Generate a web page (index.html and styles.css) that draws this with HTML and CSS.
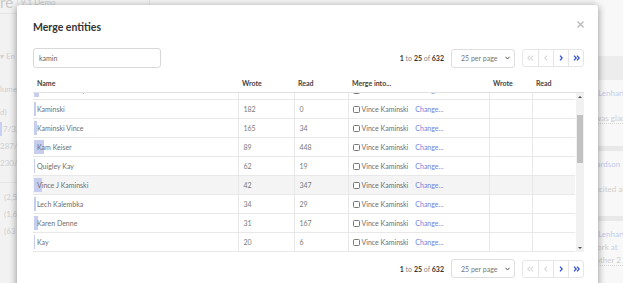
FILE: index.html
```html
<!DOCTYPE html>
<html lang="en">
<head>
  <meta charset="UTF-8">
  <title>Merge entities</title>
  <link rel="stylesheet" href="styles.css">
</head>
<body>
  <!-- Page behind the dialog (mostly covered) -->
  <div class="page">
    <div class="page-left">
      <div class="page-top">
        <span class="page-title">re</span>
      </div>
      <div class="faint-row gap-l">&#9662; En</div>
      <div class="faint-row gap-m">lume</div>
      <div class="faint-row gap-s">d)</div>
      <div class="faint-row stat"><span class="stat-bar"></span>7/3,19</div>
      <div class="faint-row">287/59</div>
      <div class="faint-row">230/46</div>
      <div class="page-rule"></div>
      <div class="faint-row num">(2,52</div>
      <div class="faint-row num">(1,63</div>
      <div class="faint-row num">(63</div>
    </div>
    <div class="page-mid">
      <div class="fake-select">9.1 Demo</div>
    </div>
    <div class="page-right">
      <div class="band band-top"></div>
      <div class="card">
        <div class="link">y Lenhart</div>
        <div class="note">I was glad</div>
      </div>
      <div class="band"></div>
      <div class="card">
        <div class="link">hardson</div>
        <div class="note plain">excited about</div>
      </div>
      <div class="band"></div>
      <div class="card">
        <div class="link">y Lenhart</div>
        <div class="note plain tight">work at</div>
        <div class="note tight">nother 2</div>
      </div>
    </div>
  </div>

  <!-- Merge dialog -->
  <div class="modal">
    <div class="modal-header">
      <h2>Merge entities</h2>
      <span class="close">
        <svg width="7" height="7" viewBox="0 0 7 7"><path d="M0.5 0.5 L6.5 6.5 M6.5 0.5 L0.5 6.5" stroke="#b5b5b5" stroke-width="1.2" fill="none"/></svg>
      </span>
    </div>

    <div class="toolbar">
      <input class="search" type="text" value="kamin">
      <div class="pager">
        <span class="pager-info"><b>1</b> to <b>25</b> of <b>632</b></span>
        <div class="per-page">
          <span>25 per page</span>
          <svg width="5" height="4" viewBox="0 0 5 4"><path d="M0.5 0.8 L2.5 3 L4.5 0.8" stroke="#555" stroke-width="1" fill="none"/></svg>
        </div>
        <div class="pages">
          <span class="page-btn off"><svg width="7" height="6" viewBox="0 0 7 6"><path d="M3 0.6 L0.8 3 L3 5.4 M6 0.6 L3.8 3 L6 5.4" stroke="currentColor" stroke-width="1.1" fill="none"/></svg></span>
          <span class="page-btn off"><svg width="4" height="6" viewBox="0 0 4 6"><path d="M3 0.6 L0.8 3 L3 5.4" stroke="currentColor" stroke-width="1.1" fill="none"/></svg></span>
          <span class="page-btn"><svg width="4" height="6" viewBox="0 0 4 6"><path d="M1 0.6 L3.2 3 L1 5.4" stroke="currentColor" stroke-width="1.3" fill="none"/></svg></span>
          <span class="page-btn"><svg width="7" height="6" viewBox="0 0 7 6"><path d="M1 0.6 L3.2 3 L1 5.4 M4 0.6 L6.2 3 L4 5.4" stroke="currentColor" stroke-width="1.3" fill="none"/></svg></span>
        </div>
      </div>
    </div>

    <div class="grid">
      <table class="grid-head">
        <colgroup>
          <col class="c-name"><col class="c-wrote"><col class="c-read"><col class="c-merge"><col class="c-wrote2"><col class="c-read2"><col class="c-bar">
        </colgroup>
        <tr>
          <th>Name</th><th>Wrote</th><th>Read</th><th>Merge into...</th><th>Wrote</th><th>Read</th><th></th>
        </tr>
      </table>
      <div class="grid-body">
        <div class="grid-scroll">
          <table class="rows">
            <colgroup>
              <col class="c-name"><col class="c-wrote"><col class="c-read"><col class="c-merge"><col class="c-wrote2"><col class="c-read2">
            </colgroup>
            <tr class="cut">
              <td class="name"><span class="bar" style="width:5px"></span><span class="label">Vince Kaminsky</span></td>
              <td>214</td><td>12</td>
              <td class="merge"><input type="checkbox"><span class="target">Vince Kaminski</span><a>Change...</a></td>
              <td></td><td></td>
            </tr>
            <tr>
              <td class="name"><span class="bar" style="width:2px"></span><span class="label">Kaminski</span></td>
              <td>182</td><td>0</td>
              <td class="merge"><input type="checkbox"><span class="target">Vince Kaminski</span><a>Change...</a></td>
              <td></td><td></td>
            </tr>
            <tr>
              <td class="name"><span class="bar" style="width:3px"></span><span class="label">Kaminski Vince</span></td>
              <td>165</td><td>34</td>
              <td class="merge"><input type="checkbox"><span class="target">Vince Kaminski</span><a>Change...</a></td>
              <td></td><td></td>
            </tr>
            <tr>
              <td class="name"><span class="bar" style="width:10px"></span><span class="label">Kam Keiser</span></td>
              <td>89</td><td>448</td>
              <td class="merge"><input type="checkbox"><span class="target">Vince Kaminski</span><a>Change...</a></td>
              <td></td><td></td>
            </tr>
            <tr>
              <td class="name"><span class="bar" style="width:1px"></span><span class="label">Quigley Kay</span></td>
              <td>62</td><td>19</td>
              <td class="merge"><input type="checkbox"><span class="target">Vince Kaminski</span><a>Change...</a></td>
              <td></td><td></td>
            </tr>
            <tr class="hover">
              <td class="name"><span class="bar" style="width:8px"></span><span class="label">Vince J Kaminski</span></td>
              <td>42</td><td>347</td>
              <td class="merge"><input type="checkbox"><span class="target">Vince Kaminski</span><a>Change...</a></td>
              <td></td><td></td>
            </tr>
            <tr>
              <td class="name"><span class="bar" style="width:1.5px"></span><span class="label">Lech Kalembka</span></td>
              <td>34</td><td>29</td>
              <td class="merge"><input type="checkbox"><span class="target">Vince Kaminski</span><a>Change...</a></td>
              <td></td><td></td>
            </tr>
            <tr>
              <td class="name"><span class="bar" style="width:4px"></span><span class="label">Karen Denne</span></td>
              <td>31</td><td>167</td>
              <td class="merge"><input type="checkbox"><span class="target">Vince Kaminski</span><a>Change...</a></td>
              <td></td><td></td>
            </tr>
            <tr>
              <td class="name"><span class="bar" style="width:1px"></span><span class="label">Kay</span></td>
              <td>20</td><td>6</td>
              <td class="merge"><input type="checkbox"><span class="target">Vince Kaminski</span><a>Change...</a></td>
              <td></td><td></td>
            </tr>
          </table>
        </div>
        <!-- scrollbar -->
        <div class="scrollbar">
          <span class="arrow up"></span>
          <div class="track"><div class="thumb"></div></div>
          <span class="arrow down"></span>
        </div>
      </div>
    </div>

    <div class="toolbar bottom">
      <div class="pager">
        <span class="pager-info"><b>1</b> to <b>25</b> of <b>632</b></span>
        <div class="per-page">
          <span>25 per page</span>
          <svg width="5" height="4" viewBox="0 0 5 4"><path d="M0.5 0.8 L2.5 3 L4.5 0.8" stroke="#555" stroke-width="1" fill="none"/></svg>
        </div>
        <div class="pages">
          <span class="page-btn off"><svg width="7" height="6" viewBox="0 0 7 6"><path d="M3 0.6 L0.8 3 L3 5.4 M6 0.6 L3.8 3 L6 5.4" stroke="currentColor" stroke-width="1.1" fill="none"/></svg></span>
          <span class="page-btn off"><svg width="4" height="6" viewBox="0 0 4 6"><path d="M3 0.6 L0.8 3 L3 5.4" stroke="currentColor" stroke-width="1.1" fill="none"/></svg></span>
          <span class="page-btn"><svg width="4" height="6" viewBox="0 0 4 6"><path d="M1 0.6 L3.2 3 L1 5.4" stroke="currentColor" stroke-width="1.3" fill="none"/></svg></span>
          <span class="page-btn"><svg width="7" height="6" viewBox="0 0 7 6"><path d="M1 0.6 L3.2 3 L1 5.4 M4 0.6 L6.2 3 L4 5.4" stroke="currentColor" stroke-width="1.3" fill="none"/></svg></span>
        </div>
      </div>
    </div>
  </div>
</body>
</html>
```

FILE: styles.css
```css
/* Colours */
:root {
  --page-bg: #f2f2f2;
  --page-text: #cfcfcf;
  --text: #666;
  --heading: #333;
  --line: #e8e8e8;
  --link: #7083d8;
  --blue: #3550d6;
  --bar: #c6cdef;
}

* {
  margin: 0;
  padding: 0;
  box-sizing: border-box;
}

body {
  width: 623px;
  height: 283px;
  overflow: hidden;
  position: relative;
  background: var(--page-bg);
  font-family: Lato, "Noto Sans", sans-serif;
  color: var(--text);
}

/* Background page */
.page {
  display: flex;
  height: 100%;
}
.page-left {
  width: 40px;
  font-size: 8px;
  color: var(--page-text);
  white-space: nowrap;
  overflow: hidden;
}
.page-top {
  height: 18px;
  border-bottom: 1px solid #e6e6e6;
  margin-bottom: 34px;
}
.page-title {
  display: block;
  font-size: 15px;
  line-height: 12px;
  margin-top: -4px;
  color: #c9c9c9;
}
.faint-row {
  line-height: 17px;
}
.gap-l { margin-bottom: 16px; }
.gap-m { margin-bottom: 6px; }
.stat {
  position: relative;
  padding-left: 3px;
}
.stat-bar {
  position: absolute;
  left: 0;
  top: 1px;
  width: 2px;
  height: 14px;
  background: #c8d0f2;
}
.page-rule {
  border-top: 1px solid #e6e6e6;
  margin: 10px 0 6px;
}
.num {
  padding-left: 4px;
}
.page-mid {
  flex: 1;
}
.fake-select {
  width: 133px;
  height: 14px;
  margin: -8px 0 0 -23px;
  border: 1px solid #e2e2e2;
  border-radius: 3px;
  font-size: 8px;
  line-height: 18px;
  padding-left: 3px;
  color: #c9c9c9;
}
.page-right {
  width: 28px;
  padding-top: 56px;
  font-size: 8px;
  white-space: nowrap;
  overflow: hidden;
  background: #f8f8f8;
}
.band {
  height: 5px;
  background: #e9e9e9;
}
.band-top {
  height: 24px;
  background: #ededed;
}
.card {
  padding: 8px 0 22px 0;
}
.link {
  color: #c3cbee;
  margin-left: -3px;
  line-height: 10px;
}
.note {
  color: #cfcfcf;
  margin-top: 15px;
  margin-left: -4px;
  line-height: 10px;
  border-bottom: 1px dotted #d5d5d5;
}
.note.plain { border-bottom: none; }
.note.tight { margin-top: 3px; }

/* Dialog */
.modal {
  position: absolute;
  left: 17px;
  top: 5px;
  width: 581px;
  height: 300px;
  background: #fff;
  border-radius: 3px;
  box-shadow: 0 2px 7px 1px rgba(0, 0, 0, 0.35);
  padding: 15px 14px 0 16px;
}
.modal-header {
  display: flex;
  justify-content: space-between;
  align-items: center;
  height: 14px;
}
.modal-header h2 {
  font-size: 10.5px;
  font-weight: 700;
  color: var(--heading);
  line-height: 14px;
}
.close {
  display: flex;
  margin-top: -5px;
}

.toolbar {
  display: flex;
  justify-content: space-between;
  align-items: center;
  margin-top: 14px;
  height: 20px;
}
.toolbar.bottom {
  justify-content: flex-end;
  margin-top: 7px;
}
.search {
  width: 128px;
  height: 20px;
  border: 1px solid #d8d8d8;
  border-radius: 3px;
  padding-left: 5px;
  font-family: inherit;
  font-size: 7px;
  color: #666;
  outline: none;
}

.pager {
  display: flex;
  align-items: center;
}
.pager-info {
  font-size: 7px;
  color: #888;
  margin-right: 7px;
}
.pager-info b {
  color: #333;
}
.per-page {
  width: 64px;
  height: 19px;
  border: 1px solid #dedede;
  border-radius: 3px;
  display: flex;
  align-items: center;
  justify-content: space-between;
  padding: 0 4px 0 9px;
  font-size: 7px;
  color: #777;
}
.pages {
  display: flex;
  margin-left: 7px;
  border: 1px solid #e6e6e6;
  border-radius: 3px;
  height: 18px;
}
.page-btn {
  width: 15px;
  display: flex;
  align-items: center;
  justify-content: center;
  color: var(--blue);
}
.page-btn + .page-btn {
  border-left: 1px solid #e6e6e6;
}
.page-btn.off {
  color: #d6d6d6;
}

/* Table */
.grid {
  margin-top: 6px;
}
table {
  border-collapse: collapse;
  table-layout: fixed;
}
.grid-head {
  width: 551px;
  border-bottom: 1px solid #e2e2e2;
}
.grid-head th {
  height: 18px;
  font-size: 7px;
  font-weight: 700;
  color: #444;
  text-align: left;
  padding-left: 4px;
}
.c-name { width: 205px; }
.c-wrote { width: 56px; }
.c-read { width: 54px; }
.c-merge { width: 141px; }
.c-wrote2 { width: 43px; }
.c-read2 { width: 43px; }
.c-bar { width: 9px; }

.grid-body {
  display: flex;
  height: 159px;
}
.grid-scroll {
  width: 542px;
  overflow: hidden;
}
.rows {
  width: 542px;
  margin-top: -12px;
}
.rows td {
  height: 19px;
  border-bottom: 1px solid var(--line);
  border-right: 1px solid var(--line);
  font-size: 7px;
  color: #7a7a7a;
  padding-left: 5px;
  white-space: nowrap;
}
.rows td:last-child {
  border-right: none;
}
.rows tr.hover td {
  background: #f4f4f4;
}
.rows td.name {
  position: relative;
  padding-left: 4px;
  color: #6e6e6e;
}
.bar {
  position: absolute;
  left: 1px;
  top: 2px;
  bottom: 2px;
  background: var(--bar);
}
.label {
  position: relative;
}
.rows td.merge {
  padding-left: 4px;
}
.merge input {
  appearance: none;
  width: 7px;
  height: 7px;
  border: 1px solid #777;
  border-radius: 1.5px;
  vertical-align: -1px;
  margin-right: 2px;
  background: #fff;
}
.target {
  color: #6e6e6e;
  margin-right: 7px;
}
.merge a {
  color: var(--link);
}

/* Scrollbar */
.scrollbar {
  width: 8px;
  margin-left: 1px;
  display: flex;
  flex-direction: column;
  align-items: center;
  background: #f1f1f1;
}
.arrow {
  width: 0;
  height: 0;
  border-left: 2px solid transparent;
  border-right: 2px solid transparent;
  margin: 3px 0;
}
.arrow.up {
  border-bottom: 2px solid #505050;
}
.arrow.down {
  border-top: 2px solid #505050;
}
.track {
  flex: 1;
  width: 100%;
  padding-top: 14px;
}
.thumb {
  height: 48px;
  margin: 0 1px;
  background: #c1c1c1;
}
```
